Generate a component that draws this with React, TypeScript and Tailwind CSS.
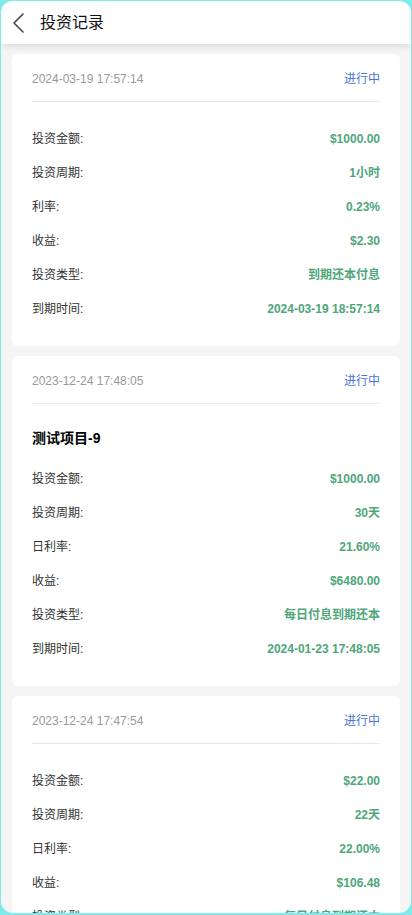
import React from "react";

type Row = [string, string];
type Rec = { date: string; title?: string; rows: Row[] };

const records: Rec[] = [
  {
    date: "2024-03-19 17:57:14",
    rows: [
      ["投资金额:", "$1000.00"],
      ["投资周期:", "1小时"],
      ["利率:", "0.23%"],
      ["收益:", "$2.30"],
      ["投资类型:", "到期还本付息"],
      ["到期时间:", "2024-03-19 18:57:14"],
    ],
  },
  {
    date: "2023-12-24 17:48:05",
    title: "测试项目-9",
    rows: [
      ["投资金额:", "$1000.00"],
      ["投资周期:", "30天"],
      ["日利率:", "21.60%"],
      ["收益:", "$6480.00"],
      ["投资类型:", "每日付息到期还本"],
      ["到期时间:", "2024-01-23 17:48:05"],
    ],
  },
  {
    date: "2023-12-24 17:47:54",
    rows: [
      ["投资金额:", "$22.00"],
      ["投资周期:", "22天"],
      ["日利率:", "22.00%"],
      ["收益:", "$106.48"],
      ["投资类型:", "每日付息到期还本"],
      ["到期时间:", "2024-01-15 17:47:54"],
    ],
  },
];

const font = {
  fontFamily: '"Liberation Sans", Arial, "Noto Sans CJK SC", sans-serif',
};

function Card({ r }: { r: Rec }) {
  return (
    <div className="bg-white rounded-[6px] px-5 pb-[20px]">
      <div className="flex items-center justify-between pt-[17px] pb-[14px] border-b border-[#e8e8e8] leading-4 text-[12px]">
        <span className="text-[#9a9a9a]">{r.date}</span>
        <span className="text-[#4a74d2]">进行中</span>
      </div>
      <div className="pt-5">
        {r.title && (
          <div className="h-[28px] flex items-center text-[14px] font-bold text-black mb-[10px]">
            {r.title}
          </div>
        )}
        {r.rows.map(([k, v]) => (
          <div key={k} className="h-[34px] flex items-center justify-between text-[12px]">
            <span className="text-[#333]">{k}</span>
            <span className="text-[#4fa67a] font-bold">{v}</span>
          </div>
        ))}
      </div>
    </div>
  );
}

export default function App() {
  return (
    <div className="w-[412px] h-[915px] bg-[#7eeaea] pt-px px-px pb-[2px]" style={font}>
      <div className="w-full h-full rounded-[12px] overflow-hidden bg-[#f5f5f5] flex flex-col">
        <div className="h-[43px] shrink-0 bg-white flex items-center shadow-[0_2px_8px_rgba(0,0,0,0.12)] relative z-10">
          <svg width="24" height="24" viewBox="0 0 24 24" className="ml-[6px]">
            <path d="M16 3 L7 12 L16 21" fill="none" stroke="#444" strokeWidth="1.6" strokeLinecap="round" strokeLinejoin="round" />
          </svg>
          <span className="ml-[9px] text-[16px] text-[#111]">投资记录</span>
        </div>
        <div className="flex-1 overflow-hidden px-[11px] pt-[10px] flex flex-col gap-[10px]">
          {records.map((r) => (
            <Card key={r.date} r={r} />
          ))}
        </div>
      </div>
    </div>
  );
}
